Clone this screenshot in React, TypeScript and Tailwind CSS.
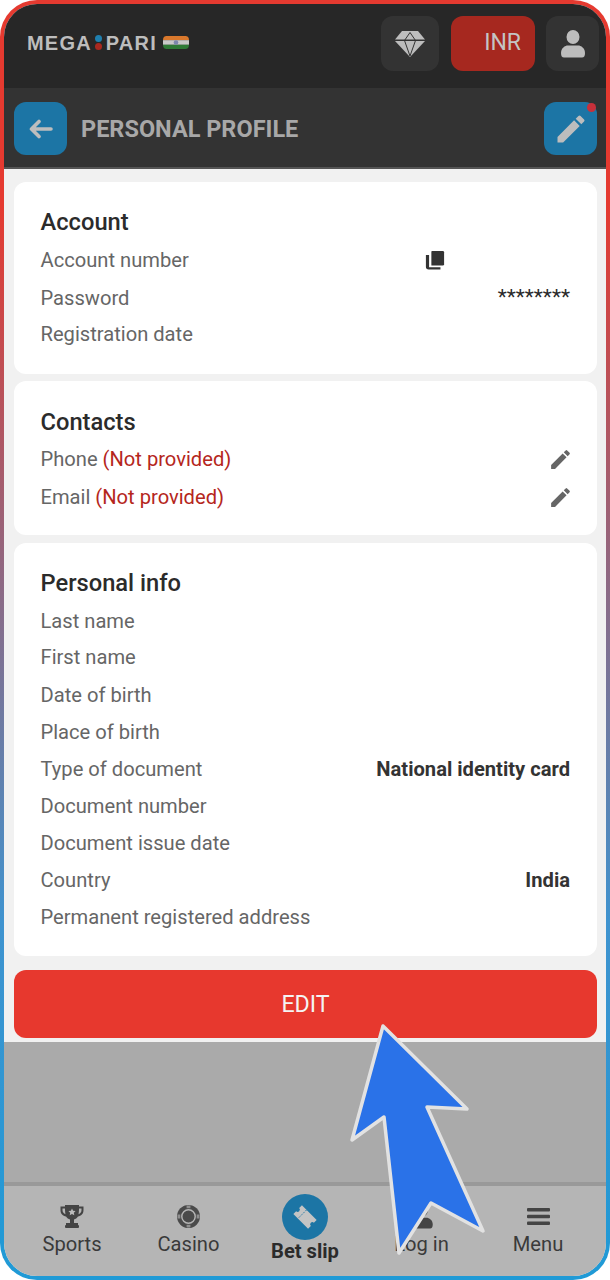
import React from "react";

const Pencil = ({ size = 25, color = "#666", cls = "" }: { size?: number; color?: string; cls?: string }) => (
  <svg width={size} height={size} viewBox="0 0 24 24" fill={color} className={cls}>
    <path d="M3 17.25V21h3.75L17.81 9.94l-3.75-3.75L3 17.25zM20.71 7.04a1 1 0 0 0 0-1.41l-2.34-2.34a1 1 0 0 0-1.41 0l-1.83 1.83 3.75 3.75 1.83-1.83z" />
  </svg>
);

const Row = ({ children, right, h = "h-[37px]" }: { children: React.ReactNode; right?: React.ReactNode; h?: string }) => (
  <div className={`flex ${h} items-center justify-between text-[20.15px] text-[#666]`}>
    <div>{children}</div>
    {right}
  </div>
);

const Card = ({ title, children, cls, titleCls }: { title: string; children: React.ReactNode; cls: string; titleCls: string }) => (
  <section className={`rounded-[12px] bg-white pr-[27px] pl-[26.5px] ${cls}`}>
    <h2 className={`h-[28px] text-[23.7px] leading-[28px] font-medium text-[#2b2b2b] ${titleCls}`}>{title}</h2>
    {children}
  </section>
);

const NavItem = ({ icon, label }: { icon: React.ReactNode; label: string }) => (
  <div className="flex w-[116.5px] flex-col items-center text-[20.15px] leading-[24px] text-[#3a3a3a]">
    <div className="mb-[1px] flex h-[30px] items-center justify-center">{icon}</div>
    <span>{label}</span>
  </div>
);

const User = ({ w, h }: { w: number; h: number }) => (
  <svg width={w} height={h} viewBox="0 0 24 28" fill="currentColor">
    <ellipse cx="12" cy="7" rx="6.5" ry="7" />
    <path d="M0 23c0-5 4-7.500 7-7.500h10c3 0 7 2.500 7 7.500 0 3-1 4.500-3 4.500H3c-2 0-3-1.500-3-4.500z" />
  </svg>
);

export default function App() {
  return (
    <div className="relative h-[1280px] w-[610px] overflow-hidden bg-white font-['Roboto',sans-serif]">
      <div className="h-full rounded-[37px] bg-[linear-gradient(180deg,#e53a30_0%,#e53a30_16%,#3f93cf_72%,#1f9ad6_100%)] p-[4px]">
        <div className="flex h-full flex-col overflow-hidden rounded-[33px] bg-[#f1f1f1]">
          <header className="flex h-[84px] shrink-0 items-start bg-[#272727] pt-[12px] pr-[7px] pl-[23px]">
            <div className="flex h-[53px] items-center font-['Liberation_Sans',sans-serif] text-[20px] leading-none font-bold tracking-[1.2px] text-[#bdbdbd]">
              <span>MEGA</span>
              <span className="mr-[4px] ml-[3px] flex flex-col gap-[1px]">
                <span className="h-[7px] w-[7px] rounded-full bg-[#1f7fae]" />
                <span className="h-[7px] w-[7px] rounded-full bg-[#a8281f]" />
              </span>
              <span>PARI</span>
              <svg width="28" height="13" viewBox="0 0 28 14" className="ml-[5px]">
                <path d="M4 0h20q4 0 4 4.500H0Q0 0 4 0z" fill="#d9782c" />
                <rect y="4.500" width="28" height="5" fill="#c9c9c9" />
                <path d="M0 9.500h28q0 4.500-4 4.500H4q-4 0-4-4.500z" fill="#2f7a36" />
                <circle cx="14" cy="7" r="2.500" fill="#7d86ad" />
              </svg>
            </div>
            <div className="ml-auto flex items-center">
              <div className="flex h-[55px] w-[58px] items-center justify-center rounded-[12px] bg-[#333]">
                <svg width="30" height="26" viewBox="0 0 30 26" fill="#bdbdbd">
                  <path d="M7 0h16l7 8.500H0z" />
                  <path d="M0 10h30L15 26z" />
                  <path d="M9.500 9.500 15 1.500l5.500 8L15 25z" fill="none" stroke="#333" strokeWidth="1" />
                </svg>
              </div>
              <div className="ml-[12px] flex h-[55px] w-[84px] items-center justify-end rounded-[12px] bg-[#a6281f] pr-[14px] text-[23px] text-[#c4c4c4]">INR</div>
              <div className="ml-[11px] flex h-[55px] w-[53px] items-center justify-center rounded-[12px] bg-[#333] text-[#bdbdbd]">
                <User w={24} h={28} />
              </div>
            </div>
          </header>

          <div className="flex h-[81px] shrink-0 items-center justify-between border-b-2 border-[#555] bg-[#333] pt-[2px] pr-[9px] pl-[10px]">
            <div className="flex items-center gap-[14px]">
              <div className="flex h-[53px] w-[53px] items-center justify-center rounded-[12px] bg-[#1c75a5]">
                <svg width="24" height="20" viewBox="0 0 24 20" fill="none" stroke="#bdbdbd" strokeWidth="3.600" strokeLinecap="round" strokeLinejoin="round">
                  <path d="M22 10H3M10 2.500 2.500 10l7.500 7.500" />
                </svg>
              </div>
              <span className="pt-[3px] text-[23.500px] font-bold text-[#a8a8a8]">PERSONAL PROFILE</span>
            </div>
            <div className="relative flex h-[53px] w-[53px] items-center justify-center rounded-[12px] bg-[#1c75a5]">
              <Pencil size={36} color="#bdbdbd" />
              <span className="absolute top-[1px] right-[1px] h-[9px] w-[9px] rounded-full bg-[#c8303a]" />
            </div>
          </div>

          <main className="flex shrink-0 flex-col pt-[13px] pr-[9px] pl-[10px]">
            <Card title="Account" cls="h-[192px] pt-[26px]" titleCls="mb-[6px]">
              <Row right={
                <svg width="20" height="21" viewBox="0 0 22 22" fill="#333" className="mr-[125px]">
                  <path d="M7 1.500q0-1 1-1h11.500q1.500 0 1.500 1.500v13q0 1.500-1.500 1.500H7z" />
                  <path d="M4.500 5v13.500H17V21H4q-3 0-3-3V5z" />
                </svg>
              }>Account number</Row>
              <Row h="h-[38px]" right={<span className="text-[21px] text-[#2b2b2b]">********</span>}>Password</Row>
              <Row h="h-[35px]">Registration date</Row>
            </Card>
            <Card title="Contacts" cls="mt-[7px] h-[154px] pt-[27px]" titleCls="mb-[4px]">
              <Row h="h-[38px]" right={<Pencil cls="-mr-[3px]" />}>Phone <span className="text-[#b5261c]">(Not provided)</span></Row>
              <Row h="h-[38px]" right={<Pencil cls="-mr-[3px]" />}>Email <span className="text-[#b5261c]">(Not provided)</span></Row>
            </Card>
            <Card title="Personal info" cls="mt-[8px] h-[413px] pt-[26px]" titleCls="mb-[6px]">
              <Row h="h-[36px]">Last name</Row>
              <Row h="h-[37px]">First name</Row>
              <Row h="h-[38px]">Date of birth</Row>
              <Row>Place of birth</Row>
              <Row right={<b className="font-bold text-[#333]">National identity card</b>}>Type of document</Row>
              <Row>Document number</Row>
              <Row>Document issue date</Row>
              <Row right={<b className="font-bold text-[#333]">India</b>}>Country</Row>
              <Row>Permanent registered address</Row>
            </Card>
            <button className="mt-[14px] mb-[4px] flex h-[68px] items-center justify-center rounded-[12px] bg-[#e7382e] text-[23.200px] text-[#f4f4f4]">EDIT</button>
          </main>

          <div className="min-h-0 flex-1 bg-[#aaa]" />

          <nav className="flex h-[94px] shrink-0 items-start justify-center border-t-4 border-[#999] bg-[#b5b5b5] pt-[15px]">
            <NavItem label="Sports" icon={
              <svg width="24" height="24" viewBox="0 0 24 24" fill="#444">
                <path d="M5 1h14v1.500h4.500V6c0 4-2.500 6-5.500 6.500-1 1.500-2.500 2.500-4 3V19h4v2H6v-2h4v-3.500c-1.500-.5-3-1.500-4-3C3 12 .5 10 .5 6V2.500H5zM2.500 4.500V6c0 2 1 3.500 3 4.200C5.200 9 5 7 5 4.500zM19 4.500c0 2.500-.2 4.500-.5 5.700 2-.7 3-2.200 3-4.200V4.500z" />
                <path d="m12 4.500 1.100 2.300 2.500.3-1.800 1.700.5 2.500-2.300-1.200-2.300 1.200.5-2.500-1.800-1.700 2.500-.3z" fill="#bbb" />
                <rect x="5" y="21" width="14" height="3" rx="1" />
              </svg>
            } />
            <NavItem label="Casino" icon={
              <svg width="23" height="23" viewBox="0 0 24 24">
                <circle cx="12" cy="12" r="12" fill="#4a4a4a" />
                <circle cx="12" cy="12" r="7" fill="none" stroke="#b5b5b5" strokeWidth="1.500" />
                <circle cx="12" cy="12" r="4" fill="#4a4a4a" />
                <path d="M10 .500h4v3h-4zM10 20.500h4v3h-4zM.500 10h3v4h-3zM20.500 10h3v4h-3z" fill="#8f8f8f" />
              </svg>
            } />
            <div className="-mt-[7px] flex w-[116.5px] flex-col items-center">
              <div className="flex h-[46px] w-[46px] items-center justify-center rounded-full bg-[#1c75a5]">
                <svg width="26" height="26" viewBox="-15 -15 30 30" fill="#c4c4c4">
                  <g transform="rotate(45)">
                    <path d="M-12 -7H12V-2.500A2.500 2.500 0 0 0 12 2.500V7H-12V2.500A2.500 2.500 0 0 0 -12 -2.500z" />
                    <path d="M-4.500 -7V7" stroke="#1c75a5" strokeWidth="1" strokeDasharray="2 1.500" />
                  </g>
                </svg>
              </div>
              <span className="-mt-[1px] text-[20.15px] leading-[24px] font-bold text-[#2b2b2b]">Bet slip</span>
            </div>
            <NavItem label="Log in" icon={
              <span className="text-[#444]"><User w={22} h={25} /></span>
            } />
            <NavItem label="Menu" icon={
              <svg width="23" height="17" viewBox="0 0 23 17" fill="#444">
                <rect width="23" height="3.600" rx="1" />
                <rect y="6.700" width="23" height="3.600" rx="1" />
                <rect y="13.400" width="23" height="3.600" rx="1" />
              </svg>
            } />
          </nav>
        </div>
      </div>

      <svg width="610" height="1280" viewBox="0 0 610 1280" className="pointer-events-none absolute inset-0">
        <path d="M383 1026 467 1109 427 1107 483 1231 431 1203 399 1253 384 1117 352 1140z" fill="#2a72e8" stroke="#e2e2e2" strokeWidth="3.500" strokeLinejoin="round" />
      </svg>
    </div>
  );
}
